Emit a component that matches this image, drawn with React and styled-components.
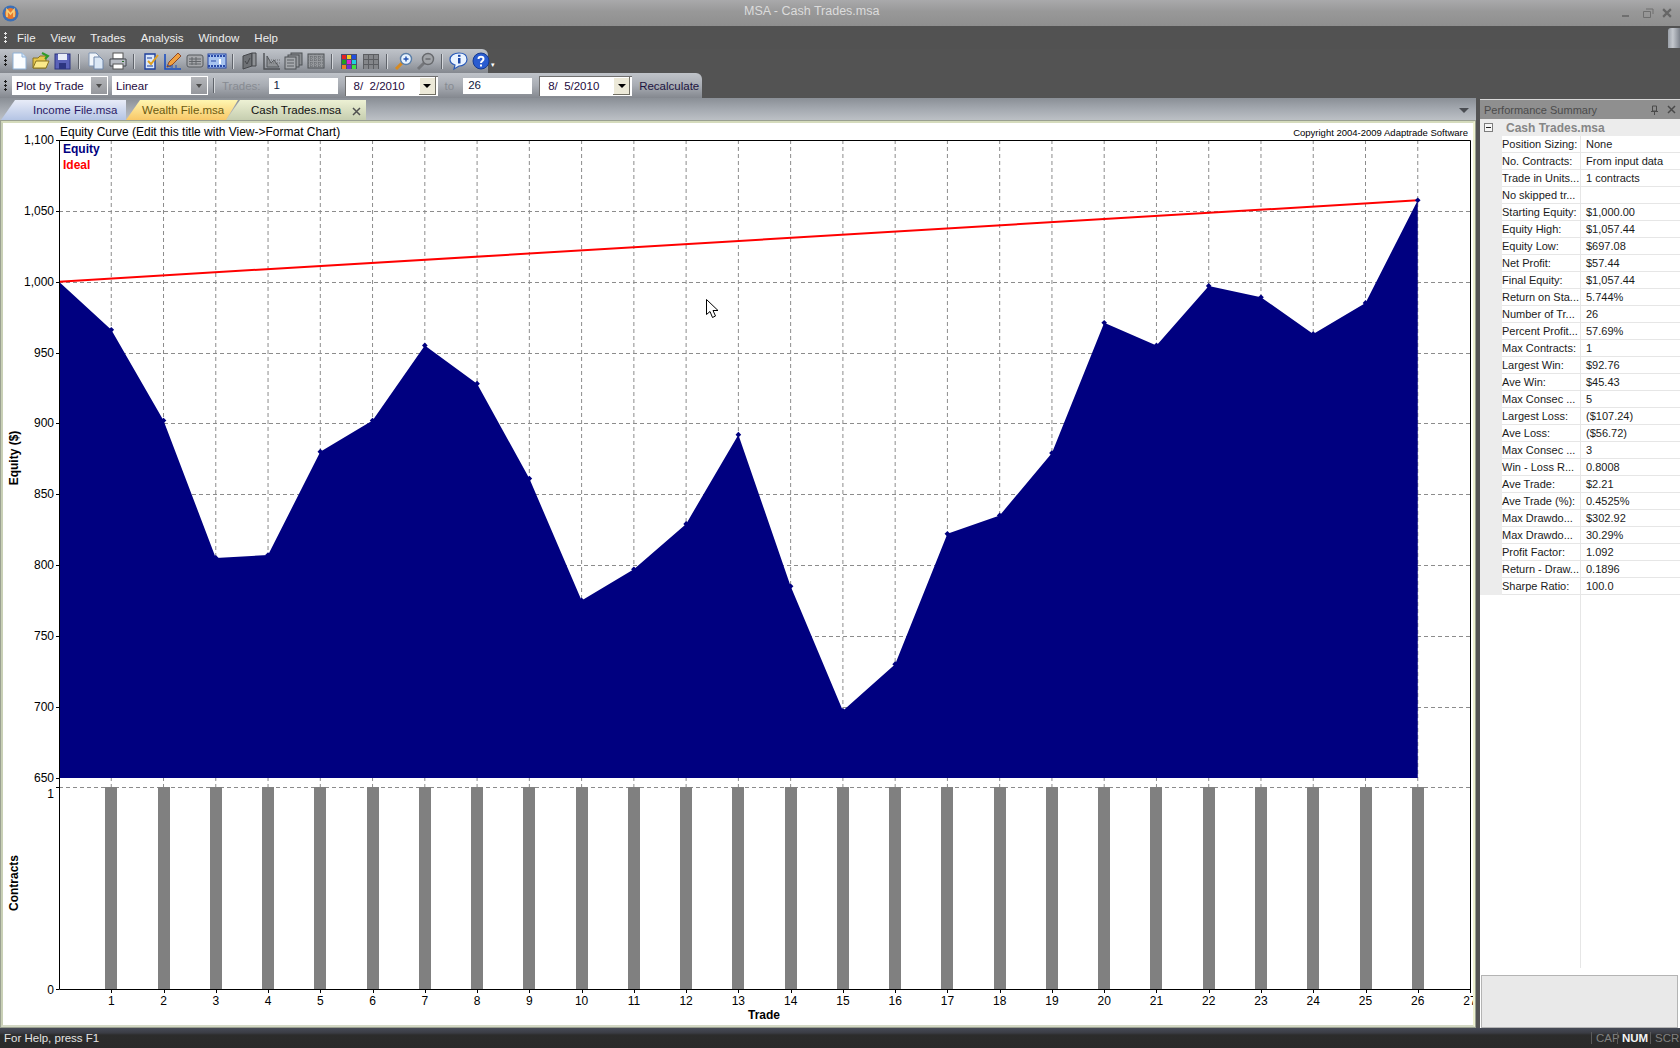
import React from "react";
import styled, { createGlobalStyle } from "styled-components";

const UI_FONT = `"Liberation Sans", Arial, sans-serif`;

const GlobalStyle = createGlobalStyle`
  html, body { margin: 0; padding: 0; background: #535353; }
  body { font-family: ${UI_FONT}; font-size: 11px; overflow: hidden; }
  * { box-sizing: border-box; }
`;

/* ---------- chart data ---------- */
const EQUITY = [1000, 966, 902, 805, 807, 880, 902, 955, 928, 861, 775, 797, 829, 892, 785, 697.08, 730, 822, 835, 879, 971, 955, 997, 989, 963, 985, 1057.44];
const X_STEP = 52.26;
const xAt = (n) => 59 + n * X_STEP;
const yAt = (v) => 140 + (1100 - v) * 1.4167;

const SUMMARY = [
  ["Position Sizing:", "None"],
  ["No. Contracts:", "From input data"],
  ["Trade in Units...", "1 contracts"],
  ["No skipped tr...", ""],
  ["Starting Equity:", "$1,000.00"],
  ["Equity High:", "$1,057.44"],
  ["Equity Low:", "$697.08"],
  ["Net Profit:", "$57.44"],
  ["Final Equity:", "$1,057.44"],
  ["Return on Sta...", "5.744%"],
  ["Number of Tr...", "26"],
  ["Percent Profit...", "57.69%"],
  ["Max Contracts:", "1"],
  ["Largest Win:", "$92.76"],
  ["Ave Win:", "$45.43"],
  ["Max Consec ...", "5"],
  ["Largest Loss:", "($107.24)"],
  ["Ave Loss:", "($56.72)"],
  ["Max Consec ...", "3"],
  ["Win - Loss R...", "0.8008"],
  ["Ave Trade:", "$2.21"],
  ["Ave Trade (%):", "0.4525%"],
  ["Max Drawdo...", "$302.92"],
  ["Max Drawdo...", "30.29%"],
  ["Profit Factor:", "1.092"],
  ["Return - Draw...", "0.1896"],
  ["Sharpe Ratio:", "100.0"],
];

/* ---------- window chrome ---------- */
const Page = styled.div`
  width: 1680px;
  height: 1048px;
  display: flex;
  flex-direction: column;
  background: #535353;
  overflow: hidden;
`;

const TitleBar = styled.div`
  height: 26px;
  flex: none;
  display: flex;
  align-items: center;
  justify-content: space-between;
  padding: 0 8px 0 2px;
  position: relative;
  background: linear-gradient(#a9a9ab, #989898 45%, #8f8f8f);
`;

const TitleText = styled.div`
  position: absolute;
  left: 744px;
  top: 4px;
  font-size: 12.5px;
  color: #dcdcdc;
`;

const WindowButtons = styled.div`
  display: flex;
  align-items: center;
  gap: 8px;
  color: #6a6a6a;
`;

const MenuBar = styled.div`
  height: 23px;
  flex: none;
  display: flex;
  align-items: center;
  padding-left: 4px;
  position: relative;
  background: #525252;
`;

const MenuItem = styled.div`
  margin-left: ${(p) => p.$gap}px;
  font-size: 11.5px;
  color: #eeeeee;
`;

const Grip = styled.div`
  width: 3px;
  height: 12px;
  flex: none;
  background: radial-gradient(circle at 1.5px 1.5px, ${(p) => p.$color || "#1c1c1c"} 1.2px, transparent 1.4px) 0 0 / 3px 4px;
`;

const FloatGrip = styled.div`
  position: absolute;
  right: 0;
  top: 2px;
  width: 12px;
  height: 20px;
  background: linear-gradient(90deg, #9aa0a8, #c4c8ce 40%, #7d838c);
  border-top-left-radius: 3px;
`;

const ToolRow = styled.div`
  width: ${(p) => p.$width}px;
  height: ${(p) => p.$height}px;
  flex: none;
  display: flex;
  align-items: center;
  padding-left: 4px;
  border-top-right-radius: 6px;
  background: linear-gradient(#bfc3c9, #a8acb3 50%, #84888f);
`;

const ToolButton = styled.div`
  width: 20px;
  height: 20px;
  margin-left: 2px;
  flex: none;
  display: flex;
  align-items: center;
  justify-content: center;
`;

const ToolSep = styled.div`
  width: 1px;
  height: 15px;
  margin: 0 ${(p) => p.$side || 6}px;
  flex: none;
  background: #5f636a;
  box-shadow: 1px 0 0 #d4d7db;
`;

const Overflow = styled.div`
  margin-left: auto;
  margin-right: 0;
  margin-top: 8px;
  width: 8px;
  height: 14px;
  color: #fff;
  font-size: 7px;
  line-height: 14px;
`;

const Combo = styled.div`
  width: ${(p) => p.$width}px;
  height: 19px;
  margin-left: ${(p) => p.$gap || 0}px;
  flex: none;
  display: flex;
  align-items: center;
  justify-content: space-between;
  padding-left: 4px;
  background: #fff;
  color: #1e0b40;
  font-size: 11.5px;
`;

const ComboArrow = styled.div`
  width: 16px;
  height: 17px;
  margin-right: 1px;
  display: flex;
  align-items: center;
  justify-content: center;
  background: linear-gradient(#b4b6ba, #96989d);
  &::after {
    content: "";
    border: 3px solid transparent;
    border-top: 4px solid #4c4c4c;
    border-bottom: 0;
  }
`;

const DateBox = styled.div`
  width: ${(p) => p.$width}px;
  height: 20px;
  margin-left: ${(p) => p.$gap}px;
  flex: none;
  display: flex;
  align-items: center;
  justify-content: space-between;
  padding-left: 8px;
  background: #fff;
  border-top: 1px solid #6f6f6f;
  border-left: 1px solid #6f6f6f;
  color: #1e0b40;
  font-size: 11.5px;
  white-space: pre;
`;

const DateArrow = styled.div`
  width: 17px;
  height: 18px;
  margin-right: 2px;
  display: flex;
  align-items: center;
  justify-content: center;
  background: #ece9d8;
  box-shadow: inset -1px -1px 0 #716f64, inset 1px 1px 0 #fff;
  &::after {
    content: "";
    border: 4px solid transparent;
    border-top: 4px solid #000;
    border-bottom: 0;
  }
`;

const FieldLabel = styled.div`
  margin-left: ${(p) => p.$gap}px;
  color: #878b92;
  font-size: 11.5px;
  flex: none;
`;

const TextField = styled.div`
  width: 69px;
  height: 16px;
  margin-left: ${(p) => p.$gap}px;
  flex: none;
  padding-left: 5px;
  background: #fff;
  color: #102040;
  font-size: 11.5px;
  line-height: 15px;
`;

const RecalcButton = styled.div`
  margin-left: 7px;
  color: #1d1440;
  font-size: 11.5px;
`;

/* ---------- workspace ---------- */
const Workspace = styled.div`
  flex: 1;
  min-height: 0;
  display: flex;
  gap: 4px;
`;

const DocArea = styled.div`
  width: 1476px;
  flex: none;
  display: flex;
  flex-direction: column;
`;

const TabStrip = styled.div`
  height: 22px;
  flex: none;
  display: flex;
  align-items: flex-end;
  position: relative;
  padding-left: 1px;
  background: linear-gradient(#8a8f96, #a4a9b0 50%, #bcc0c5);
`;

const Tab = styled.div`
  height: 20px;
  width: ${(p) => p.$width}px;
  margin-left: ${(p) => p.$overlap || 0}px;
  padding-left: ${(p) => p.$pad}px;
  flex: none;
  display: flex;
  align-items: center;
  font-size: 11.5px;
  color: ${(p) => p.$color};
  background: ${(p) => p.$bg};
  clip-path: polygon(14px 0, 100% 0, ${(p) => p.$end}, 0 100%);
  position: relative;
  z-index: ${(p) => p.$z || 0};
`;

const TabClose = styled.svg`
  position: absolute;
  right: 5px;
  top: 7px;
`;

const TabMenu = styled.div`
  position: absolute;
  right: 7px;
  top: 10px;
  border: 5px solid transparent;
  border-top: 5px solid #4a4d52;
  border-bottom: 0;
`;

const ChartFrame = styled.div`
  flex: 1;
  min-height: 0;
  background: #fff;
  border: 3px solid #eef1cf;
  border-left-color: #c9d0b6;
  border-top-color: #d5dbbc;
  border-bottom-color: #d3d8c4;
  outline: 1px solid #9aa091;
  outline-offset: -1px;
`;

const ChartSvg = styled.svg`
  display: block;
  font-family: ${UI_FONT};
`;

/* ---------- right panel ---------- */
const SidePanel = styled.div`
  flex: 1;
  min-width: 0;
  display: flex;
  flex-direction: column;
  margin-top: 1px;
  background: #fff;
  border-top: 1px solid #d8d8d8;
`;

const PanelHeader = styled.div`
  height: 19px;
  flex: none;
  display: flex;
  align-items: center;
  justify-content: space-between;
  padding: 0 4px 0 4px;
  background: #8f8f8f;
  color: #4b4b4b;
  font-size: 11px;
`;

const PanelIcons = styled.div`
  display: flex;
  align-items: center;
  gap: 8px;
`;

const GroupRow = styled.div`
  height: 17px;
  flex: none;
  display: flex;
  align-items: center;
  background: #ececec;
  font-size: 12px;
  font-weight: bold;
  color: #868686;
`;

const Expander = styled.div`
  width: 9px;
  height: 9px;
  margin: 0 13px 0 4px;
  position: relative;
  background: #f6f6f6;
  border: 1px solid #7d7d7d;
  &::after {
    content: "";
    position: absolute;
    left: 1px;
    top: 3px;
    width: 5px;
    height: 1px;
    background: #222;
  }
`;

const PropRows = styled.div`
  flex: 1;
  min-height: 0;
  position: relative;
  &::after {
    content: "";
    position: absolute;
    left: 100px;
    top: 0;
    bottom: 7px;
    width: 1px;
    background: #e6e6e6;
  }
`;

const PropRow = styled.div`
  height: 17px;
  display: grid;
  grid-template-columns: 22px 78px 1fr;
  align-items: center;
  font-size: 11px;
  color: #1a1a1a;
  white-space: nowrap;
`;

const PropGutter = styled.div`
  height: 17px;
  background: #ececec;
`;

const PropName = styled.div`
  height: 17px;
  line-height: 16px;
  border-bottom: 1px solid #e6e6e6;
`;

const PropValue = styled.div`
  height: 17px;
  line-height: 16px;
  padding-left: 6px;
  border-bottom: 1px solid #e6e6e6;
`;

const DescBox = styled.div`
  height: 53px;
  flex: none;
  margin: 0 2px 0 1px;
  background: #e9e9e9;
  border: 1px solid #b4b4b4;
`;

/* ---------- status bar ---------- */
const StatusBar = styled.div`
  height: 20px;
  flex: none;
  display: flex;
  align-items: center;
  justify-content: space-between;
  padding-left: 4px;
  background: linear-gradient(#474b57, #3a3c44 25%, #2c2c2c 35%, #2a2a2a);
  color: #e4e4e4;
  font-size: 11.5px;
`;

const Indicators = styled.div`
  display: flex;
  align-items: center;
  height: 100%;
`;

const Indicator = styled.div`
  width: ${(p) => p.$width}px;
  padding-left: 4px;
  border-left: 1px solid #5a5a5a;
  font-weight: ${(p) => (p.$on ? "bold" : "normal")};
  color: ${(p) => (p.$on ? "#f4f4f4" : "#808080")};
`;

/* ---------- toolbar icons (20x20 drawings) ---------- */
const Ico = ({ children, dim }) => (
  <ToolButton>
    <svg width="20" height="20" viewBox="0 0 20 20" style={dim ? { opacity: 0.85 } : undefined}>{children}</svg>
  </ToolButton>
);

const NewIcon = () => (
  <Ico><path d="M4 2h9l4 4v12H4z" fill="#fbfdff" stroke="#8fb2d8" /><path d="M13 2v4h4" fill="#d6e6f7" stroke="#8fb2d8" /></Ico>
);
const OpenIcon = () => (
  <Ico>
    <path d="M2 7h5l2-2h6v12H2z" fill="#e8c84c" stroke="#8a7420" />
    <path d="M2 17l3-7h13l-3 7z" fill="#fbe98a" stroke="#8a7420" />
    <path d="M11 2l6 3-3 3" fill="none" stroke="#2f9a2a" strokeWidth="2" />
  </Ico>
);
const SaveIcon = () => (
  <Ico>
    <rect x="2" y="3" width="15" height="15" fill="#5a62b8" stroke="#2c3580" />
    <rect x="5" y="3" width="9" height="6" fill="#e8ecf8" />
    <rect x="6" y="12" width="7" height="6" fill="#2c3580" />
  </Ico>
);
const CopyIcon = () => (
  <Ico>
    <path d="M3 2h7l3 3v10H3z" fill="#f2f6fb" stroke="#7f95b5" />
    <path d="M8 6h6l3 3v9H8z" fill="#dbe7f5" stroke="#6e86aa" />
  </Ico>
);
const PrintIcon = () => (
  <Ico>
    <rect x="5" y="2" width="10" height="6" fill="#fff" stroke="#555" />
    <path d="M2 8h16v7H2z" fill="#b8bcc4" stroke="#44484f" />
    <rect x="5" y="13" width="10" height="5" fill="#fff" stroke="#555" />
    <rect x="14" y="10" width="2" height="1" fill="#2a6b2a" />
  </Ico>
);
const EditIcon = () => (
  <Ico>
    <path d="M4 3h10v15H4z" fill="#dbe8fa" stroke="#1d3f9c" strokeWidth="1.4" />
    <path d="M7 10l3 3 7-9" fill="none" stroke="#e0a020" strokeWidth="2" />
    <path d="M6 7h5M6 15h6" stroke="#1d3f9c" />
  </Ico>
);
const PencilIcon = () => (
  <Ico>
    <path d="M2 3v15h16" fill="none" stroke="#1d4fc0" strokeWidth="1.6" />
    <path d="M4 16l2-5 9-9 3 3-9 9z" fill="#f0a040" stroke="#803010" strokeWidth=".8" />
    <path d="M4 14l4 2M9 14v3M13 14v3" stroke="#1d4fc0" />
  </Ico>
);
const TableIcon = () => (
  <Ico>
    <rect x="2" y="4" width="16" height="12" rx="2" fill="#a6a8ac" stroke="#55585d" />
    <path d="M4 8h12M4 10.5h12M4 13h12M7 6v8M11 6v8" stroke="#63666b" />
  </Ico>
);
const FilmIcon = () => (
  <Ico>
    <rect x="1" y="3" width="18" height="14" fill="#a8c4f0" stroke="#2a4aa8" />
    <path d="M1 5h18M1 15h18" stroke="#2a4aa8" strokeDasharray="2 1" strokeWidth="2" />
    <path d="M4 10h5" stroke="#2a4aa8" />
    <rect x="12" y="8" width="2" height="5" fill="#fff" />
  </Ico>
);
const GreyBook = () => (
  <Ico>
    <path d="M3 5l9-3v13l-9 3z" fill="#6f7276" stroke="#45474b" />
    <path d="M12 2h4v13h-4z" fill="#8f9296" stroke="#45474b" />
    <path d="M5 10l2 3 3-6" fill="none" stroke="#45474b" />
  </Ico>
);
const GreyGraph = () => (
  <Ico>
    <path d="M2 2v16h16" fill="none" stroke="#4d5054" strokeWidth="1.4" />
    <path d="M5 16V5l4 7 3-3 5 7z" fill="#8e9195" stroke="#55585c" />
    <path d="M5 9h13M5 12h13" stroke="#6c6f73" strokeDasharray="1 1" />
  </Ico>
);
const GreyPages = () => (
  <Ico>
    <rect x="7" y="2" width="11" height="12" fill="#8c8f93" stroke="#4d5054" />
    <rect x="4" y="4" width="11" height="12" fill="#9a9da1" stroke="#4d5054" />
    <rect x="1" y="6" width="11" height="12" fill="#a6a9ad" stroke="#4d5054" />
    <path d="M3 9h7M3 12h7M3 15h7" stroke="#5d6064" />
  </Ico>
);
const GreyTicks = () => (
  <Ico>
    <rect x="2" y="3" width="16" height="14" fill="#96999d" stroke="#4d5054" />
    <path d="M2 6h16M2 9h16M2 12h16M2 15h16M5 3v14M9 3v14M13 3v14" stroke="#63666a" strokeDasharray="1 1" />
  </Ico>
);
const ColorGrid = () => (
  <Ico>
    <rect x="2" y="3" width="16" height="15" fill="#4a4f70" />
    {["#e82020", "#f0d020", "#2050e0", "#20a020", "#e020d0", "#20d0e0", "#f08020", "#7030d0", "#40e040"].map((c, i) => (
      <rect key={c} x={3 + (i % 3) * 5} y={4 + Math.floor(i / 3) * 5} width="4" height="4" fill={c} />
    ))}
  </Ico>
);
const GreyGrid = () => (
  <Ico>
    <rect x="2" y="3" width="16" height="15" fill="#5c5e62" />
    {[0, 1, 2, 3, 4, 5, 6, 7, 8].map((i) => (
      <rect key={i} x={3 + (i % 3) * 5} y={4 + Math.floor(i / 3) * 5} width="4" height="4" fill="#84868a" />
    ))}
  </Ico>
);
const ZoomIn = () => (
  <Ico>
    <path d="M2 18l6-6" stroke="#d88a20" strokeWidth="3" />
    <circle cx="12" cy="8" r="5.5" fill="#e8f4ff" stroke="#5a7ea8" strokeWidth="1.4" />
    <path d="M9.5 8h5M12 5.500v5" stroke="#2050b0" strokeWidth="1.4" />
  </Ico>
);
const ZoomOut = () => (
  <Ico>
    <path d="M2 18l6-6" stroke="#75777b" strokeWidth="3" />
    <circle cx="12" cy="8" r="5.5" fill="#a2a5a9" stroke="#67696d" strokeWidth="1.4" />
    <path d="M9.5 8h5" stroke="#67696d" strokeWidth="1.4" />
  </Ico>
);
const InfoIcon = () => (
  <Ico>
    <path d="M10 2c5 0 8 2.500 8 6.500S14 15 10 15l-5 3 1-4c-3-1-5-3-5-5.500C1 4.500 5 2 10 2z" fill="#eaf3ff" stroke="#2a5ab8" strokeWidth="1.2" />
    <rect x="9" y="7" width="2.500" height="5.500" fill="#1d47a8" />
    <rect x="9" y="3.800" width="2.500" height="2" fill="#1d47a8" />
  </Ico>
);
const HelpIcon = () => (
  <Ico>
    <circle cx="10" cy="10" r="8" fill="#2a5cd0" stroke="#153a90" />
    <path d="M7.500 8c0-3 5-3 5 0 0 2-2.500 2-2.500 4" fill="none" stroke="#fff" strokeWidth="2" />
    <rect x="9" y="13.500" width="2" height="2" fill="#fff" />
  </Ico>
);

const AppLogo = () => (
  <svg width="17" height="17" viewBox="0 0 17 17">
    <circle cx="8.500" cy="8.500" r="8" fill="#3d6fb5" />
    <circle cx="8.500" cy="8.500" r="5.500" fill="#e8792c" />
    <path d="M5 12V5l3.500 4L12 5v7" fill="none" stroke="#f7d07a" strokeWidth="1.600" />
  </svg>
);

const CloseX = ({ size = 9, color = "#4a4a4a", width = 1.5 }) => (
  <svg width={size} height={size} viewBox="0 0 9 9">
    <path d="M1 1l7 7M8 1L1 8" stroke={color} strokeWidth={width} />
  </svg>
);

/* ---------- chart ---------- */
const GRID = "#8c8c8c";
const DASH = "4 3";

const Chart = () => {
  const ticks = [];
  for (let n = 1; n <= 27; n++) ticks.push(n);
  const levels = [1050, 1000, 950, 900, 850, 800, 750, 700];
  const area =
    EQUITY.map((v, i) => `${xAt(i)},${yAt(v)}`).join(" ") +
    ` ${xAt(26)},778 ${xAt(0)},778`;

  return (
    <ChartSvg width="1470" height="905" viewBox="3 123 1470 905">
      <text x="60" y="136" fontSize="12" fill="#000">Equity Curve (Edit this title with View-&gt;Format Chart)</text>
      <text x="1468" y="136" fontSize="9.500" textAnchor="end" fill="#000">Copyright 2004-2009 Adaptrade Software</text>

      {/* upper grid */}
      {ticks.slice(0, 26).map((n) => (
        <line key={n} x1={xAt(n)} x2={xAt(n)} y1="140" y2="787" stroke={GRID} strokeDasharray={DASH} />
      ))}
      {levels.map((v) => (
        <line key={v} x1="59" x2="1470" y1={Math.round(yAt(v)) + 0.5} y2={Math.round(yAt(v)) + 0.5} stroke={GRID} strokeDasharray={DASH} />
      ))}

      <polygon points={area} fill="#000080" />
      <line x1="59" y1={yAt(1000)} x2={xAt(26)} y2={yAt(1057.44)} stroke="#ff0000" strokeWidth="2" />
      {EQUITY.slice(1).map((v, i) => (
        <rect key={i} x={xAt(i + 1) - 2} y={yAt(v) - 2} width="4" height="4" fill="#000080" transform={`rotate(45 ${xAt(i + 1)} ${yAt(v)})`} />
      ))}

      {/* lower chart */}
      <line x1="59" x2="1470" y1="787.5" y2="787.5" stroke={GRID} strokeDasharray={DASH} />
      {ticks.slice(0, 26).map((n) => (
        <rect key={n} x={Math.round(xAt(n)) - 6} y="787" width="12" height="202" fill="#808080" />
      ))}

      {/* axes */}
      <path d="M59.500 140V989.500H1470.500V140.500H59.500" fill="none" stroke="#000" />
      {[1100, 1050, 1000, 950, 900, 850, 800, 750, 700, 650].map((v) => (
        <g key={v}>
          <line x1="56" x2="59" y1={Math.round(yAt(v)) + 0.5} y2={Math.round(yAt(v)) + 0.5} stroke="#000" />
          <text x="54" y={yAt(v) + 4} fontSize="12" textAnchor="end" fill="#000">{v.toLocaleString("en-US")}</text>
        </g>
      ))}
      <line x1="56" x2="59" y1="787.500" y2="787.500" stroke="#000" />
      <line x1="56" x2="59" y1="989.500" y2="989.500" stroke="#000" />
      <text x="54" y="798" fontSize="12" textAnchor="end" fill="#000">1</text>
      <text x="54" y="994" fontSize="12" textAnchor="end" fill="#000">0</text>
      {ticks.map((n) => (
        <g key={n}>
          <line x1={Math.round(xAt(n)) + 0.5} x2={Math.round(xAt(n)) + 0.5} y1="989" y2="993" stroke="#000" />
          <text x={xAt(n)} y="1005" fontSize="12" textAnchor="middle" fill="#000">{n}</text>
        </g>
      ))}

      {/* labels */}
      <text x="63" y="153" fontSize="12" fontWeight="bold" fill="#000080">Equity</text>
      <text x="63" y="169" fontSize="12" fontWeight="bold" fill="#ff0000">Ideal</text>
      <text transform="translate(18 458) rotate(-90)" fontSize="12" fontWeight="bold" textAnchor="middle" fill="#000">Equity ($)</text>
      <text transform="translate(18 883) rotate(-90)" fontSize="12" fontWeight="bold" textAnchor="middle" fill="#000">Contracts</text>
      <text x="764" y="1019" fontSize="12" fontWeight="bold" textAnchor="middle" fill="#000">Trade</text>

      {/* mouse pointer */}
      <path d="M706.500 299.500v15l3.500-3 2.500 6 3-1.500-2.500-5.500h5z" fill="#fff" stroke="#000" />
    </ChartSvg>
  );
};

/* ---------- page ---------- */
const MENUS = [["File", 10], ["View", 15], ["Trades", 15], ["Analysis", 15], ["Window", 15], ["Help", 15]];

const App = () => (
  <Page>
    <GlobalStyle />
    <TitleBar>
      <AppLogo />
      <TitleText>MSA - Cash Trades.msa</TitleText>
      <WindowButtons>
        <svg width="12" height="10" viewBox="0 0 12 10"><rect x="2" y="7" width="7" height="2" fill="#6f6f6f" /></svg>
        <svg width="14" height="10" viewBox="0 0 14 10"><path d="M3.500 3.500h7v6h-7zM6 1h7v5" fill="none" stroke="#6f6f6f" /></svg>
        <CloseX size={10} color="#666" width={2} />
      </WindowButtons>
    </TitleBar>

    <MenuBar>
      <Grip $color="#e8e8e8" />
      {MENUS.map(([label, gap]) => (
        <MenuItem key={label} $gap={gap}>{label}</MenuItem>
      ))}
      <FloatGrip />
    </MenuBar>

    <ToolRow $width={488} $height={24}>
      <Grip />
      <NewIcon /><OpenIcon /><SaveIcon />
      <ToolSep $side={5} />
      <CopyIcon /><PrintIcon />
      <ToolSep $side={5} />
      <EditIcon /><PencilIcon /><TableIcon /><FilmIcon />
      <ToolSep $side={5} />
      <GreyBook /><GreyGraph /><GreyPages /><GreyTicks />
      <ToolSep $side={5} />
      <ColorGrid /><GreyGrid />
      <ToolSep $side={5} />
      <ZoomIn /><ZoomOut />
      <ToolSep $side={5} />
      <InfoIcon /><HelpIcon />
      <Overflow>▾</Overflow>
    </ToolRow>

    <ToolRow $width={702} $height={25}>
      <Grip />
      <Combo $width={96} $gap={5}>Plot by Trade<ComboArrow /></Combo>
      <Combo $width={96} $gap={4}>Linear<ComboArrow /></Combo>
      <ToolSep $side={5} />
      <FieldLabel $gap={3}>Trades:</FieldLabel>
      <TextField $gap={8}>1</TextField>
      <DateBox $width={93} $gap={7}>8/  2/2010<DateArrow /></DateBox>
      <FieldLabel $gap={7}>to</FieldLabel>
      <TextField $gap={9}>26</TextField>
      <DateBox $width={93} $gap={7}>8/  5/2010<DateArrow /></DateBox>
      <RecalcButton>Recalculate</RecalcButton>
    </ToolRow>

    <Workspace>
      <DocArea>
        <TabStrip>
          <Tab $width={125} $pad={32} $color="#2b1a66" $bg="linear-gradient(#e8ecf8, #b4c4e4)" $end="calc(100% + 0px) 100%" $z={1}>Income File.msa</Tab>
          <Tab $width={112} $pad={16} $color="#6b5a10" $bg="linear-gradient(#fff6b0, #f8c868)" $end="calc(100% - 12px) 100%" $overlap={0} $z={2}>Wealth File.msa</Tab>
          <Tab $width={140} $pad={25} $color="#101010" $bg="linear-gradient(#edf1d4, #c6ceb0)" $end="100% 100%" $overlap={-12} $z={1}>
            Cash Trades.msa
            <TabClose width="9" height="9" viewBox="0 0 9 9"><path d="M1 1l7 7M8 1L1 8" stroke="#505050" strokeWidth="1.500" /></TabClose>
          </Tab>
          <TabMenu />
        </TabStrip>
        <ChartFrame>
          <Chart />
        </ChartFrame>
      </DocArea>

      <SidePanel>
        <PanelHeader>
          Performance Summary
          <PanelIcons>
            <svg width="9" height="10" viewBox="0 0 9 10"><path d="M2.500 1h4v5h-4zM1 6.500h7M4.500 7v3" fill="none" stroke="#4a4a4a" /></svg>
            <CloseX />
          </PanelIcons>
        </PanelHeader>
        <GroupRow><Expander />Cash Trades.msa</GroupRow>
        <PropRows>
          {SUMMARY.map(([name, value], i) => (
            <PropRow key={i}>
              <PropGutter />
              <PropName>{name}</PropName>
              <PropValue>{value}</PropValue>
            </PropRow>
          ))}
        </PropRows>
        <DescBox />
      </SidePanel>
    </Workspace>

    <StatusBar>
      For Help, press F1
      <Indicators>
        <Indicator $width={26}>CAP</Indicator>
        <Indicator $width={33} $on>NUM</Indicator>
        <Indicator $width={30}>SCRL</Indicator>
      </Indicators>
    </StatusBar>
  </Page>
);

export default App;
